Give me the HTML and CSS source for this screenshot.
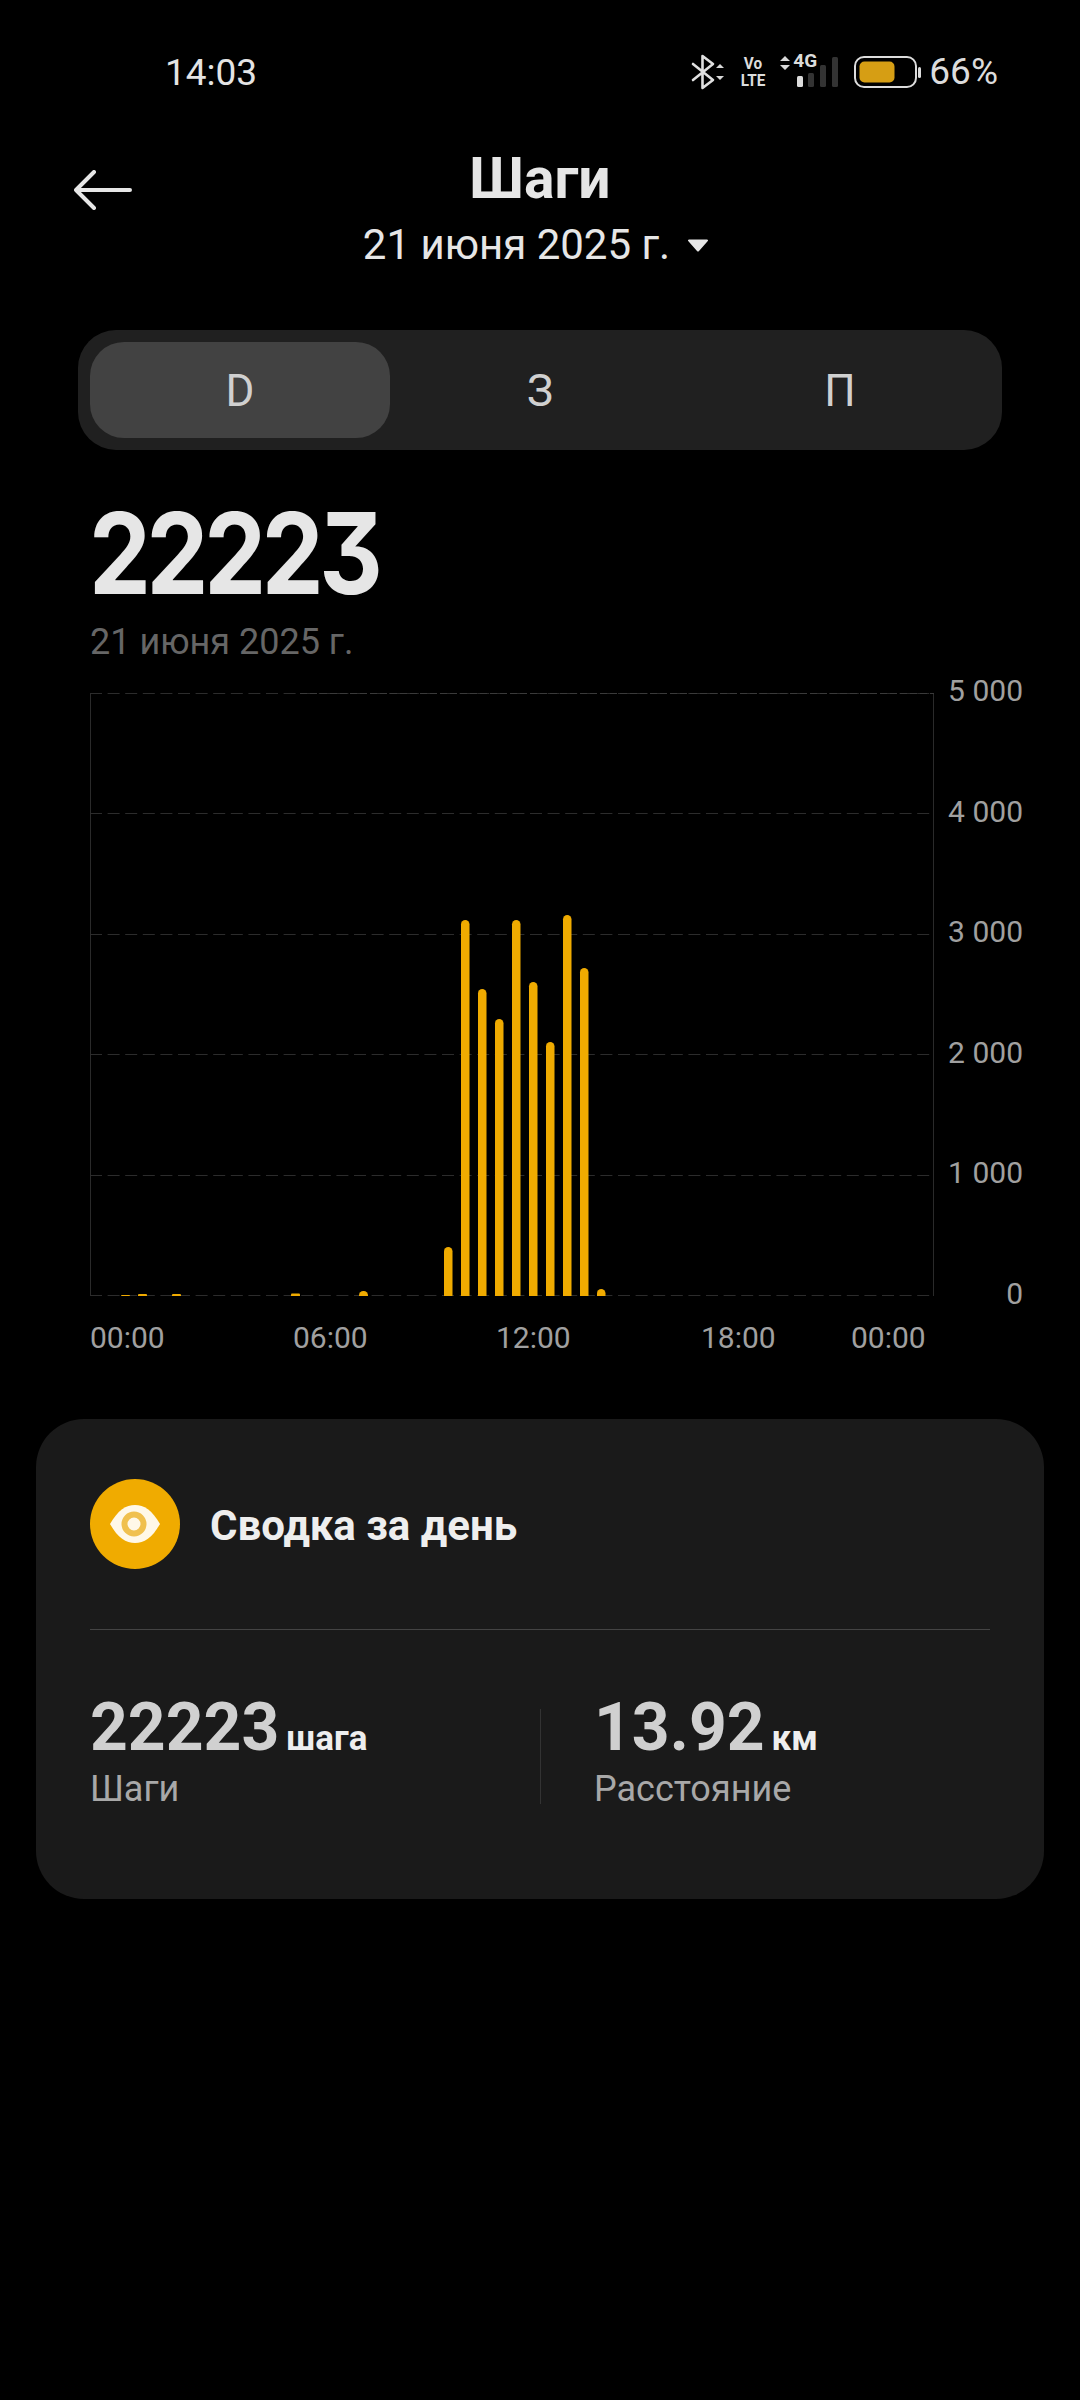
FILE: index.html
```html
<!DOCTYPE html>
<html lang="ru">
<head>
<meta charset="utf-8">
<title>Шаги</title>
<link rel="stylesheet" href="styles.css">
</head>
<body>
<main class="page">
  <div class="status-bar">
    <span class="clock">14:03</span>
    <div class="status-icons">
      <svg class="ic-bt" width="34" height="36" viewBox="0 0 34 36">
        <path d="M2 10 L22 26 L11.5 34 V2 L22 10 L2 26" fill="none" stroke="#e0e0e0" stroke-width="2.6" stroke-linecap="round" stroke-linejoin="round"/>
        <path d="M25 14 L29 10 L33 14 Z M25 22 L33 22 L29 26 Z" fill="#d8d8d8"/>
      </svg>
      <span class="volte"><span>Vo</span><span>LTE</span></span>
      <svg class="ic-arrows" width="12" height="16" viewBox="0 0 12 16">
        <path d="M1 6 L6 1 L11 6 Z M1 10 L11 10 L6 15 Z" fill="#d8d8d8"/>
      </svg>
      <div class="net">
        <svg class="ic-signal" width="44" height="32" viewBox="0 0 44 32">
          <rect x="3" y="21" width="6" height="11" rx="1.5" fill="#dcdcdc"/>
          <rect x="14" y="18" width="6" height="14" rx="1.5" fill="#333"/>
          <rect x="26" y="10" width="6" height="22" rx="1.5" fill="#333"/>
          <rect x="38" y="2" width="6" height="30" rx="1.5" fill="#333"/>
        </svg>
        <span class="net-label">4G</span>
      </div>
      <svg class="ic-battery" width="68" height="32" viewBox="0 0 68 32">
        <rect x="1" y="1" width="61" height="30" rx="9" fill="none" stroke="#dcdcdc" stroke-width="2"/>
        <rect x="5.500" y="5.500" width="35" height="21" rx="5" fill="#d69e14"/>
        <rect x="64" y="11" width="3" height="11" rx="1.500" fill="#dcdcdc"/>
      </svg>
      <span class="battery-pct">66%</span>
    </div>
  </div>

  <header class="top-bar">
    <svg class="back" width="58" height="40" viewBox="0 0 58 40">
      <path d="M20 2 L2 20 L20 38 M2 20 H56" fill="none" stroke="#e6e6e6" stroke-width="4" stroke-linecap="round" stroke-linejoin="round"/>
    </svg>
    <div class="top-titles">
      <h1 class="title">Шаги</h1>
      <div class="date-picker">
        <span>21 июня 2025 г.</span>
        <svg width="22" height="14" viewBox="0 0 22 14"><path d="M2 1.500 H20 a1 1 0 0 1 .8 1.600 L12 13 a1.300 1.300 0 0 1 -2 0 L1.200 3.100 A1 1 0 0 1 2 1.500 Z" fill="#e6e6e6"/></svg>
      </div>
    </div>
  </header>

  <nav class="segments">
    <span class="segment segment-active">D</span>
    <span class="segment">З</span>
    <span class="segment">П</span>
  </nav>

  <section class="today">
    <div class="today-value">22223</div>
    <div class="today-date">21 июня 2025 г.</div>
  </section>

  <section class="chart">
    <div class="chart-row">
      <svg class="plot" width="844" height="606" viewBox="90 692 844 606">
        <defs>
          <clipPath id="plot-area"><rect x="90" y="692" width="844" height="604"/></clipPath>
        </defs>
        <g class="frame">
          <line x1="90.500" y1="693" x2="90.500" y2="1296"/>
          <line x1="933.500" y1="693" x2="933.500" y2="1296"/>
        </g>
        <g class="grid">
          <line x1="90" y1="693.500" x2="934" y2="693.500"/>
          <line x1="90" y1="813.500" x2="934" y2="813.500"/>
          <line x1="90" y1="934.500" x2="934" y2="934.500"/>
          <line x1="90" y1="1054.500" x2="934" y2="1054.500"/>
          <line x1="90" y1="1175.500" x2="934" y2="1175.500"/>
          <line x1="90" y1="1295.500" x2="934" y2="1295.500"/>
        </g>
        <line class="grid-fine" x1="300" y1="693.500" x2="934" y2="693.500"/>
        <g class="bars" clip-path="url(#plot-area)">
          <rect x="121" y="1295" width="9" height="12" rx="1"/>
          <rect x="138" y="1294" width="9" height="12" rx="1"/>
          <rect x="172" y="1294" width="9" height="12" rx="1"/>
          <rect x="291" y="1293.500" width="9" height="12" rx="1"/>
          <rect x="359" y="1291" width="9" height="12" rx="4.250"/>
          <rect x="444" y="1247" width="8.500" height="60" rx="4.250"/>
          <rect x="461" y="920" width="8.500" height="390" rx="4.250"/>
          <rect x="478" y="989" width="8.500" height="320" rx="4.250"/>
          <rect x="495" y="1019" width="8.500" height="290" rx="4.250"/>
          <rect x="512" y="920" width="8.500" height="390" rx="4.250"/>
          <rect x="529" y="982" width="8.500" height="330" rx="4.250"/>
          <rect x="546" y="1042" width="8.500" height="270" rx="4.250"/>
          <rect x="563" y="915" width="8.500" height="395" rx="4.250"/>
          <rect x="580" y="968" width="8.500" height="340" rx="4.250"/>
          <rect x="597" y="1289" width="8.500" height="20" rx="4.250"/>
        </g>
      </svg>
      <div class="y-axis">
        <span>5 000</span>
        <span>4 000</span>
        <span>3 000</span>
        <span>2 000</span>
        <span>1 000</span>
        <span>0</span>
      </div>
    </div>
    <div class="x-axis">
      <span>00:00</span>
      <span>06:00</span>
      <span>12:00</span>
      <span>18:00</span>
      <span>00:00</span>
    </div>
  </section>

  <section class="card">
    <div class="card-head">
      <span class="badge">
        <svg width="52" height="40" viewBox="0 0 52 40">
          <path d="M1 20 C9 6 17 1 26 1 C35 1 43 6 51 20 C43 34 35 39 26 39 C17 39 9 34 1 20 Z" fill="#fff8e8"/>
          <circle cx="25" cy="20" r="9.500" fill="none" stroke="#f0c04e" stroke-width="6"/>
        </svg>
      </span>
      <h2 class="card-title">Сводка за день</h2>
    </div>
    <div class="stats">
      <div class="stat">
        <div class="stat-line"><span class="stat-value">22223</span><span class="stat-unit">шага</span></div>
        <div class="stat-label">Шаги</div>
      </div>
      <div class="stat stat-second">
        <div class="stat-line"><span class="stat-value">13.92</span><span class="stat-unit">км</span></div>
        <div class="stat-label">Расстояние</div>
      </div>
    </div>
  </section>
</main>
</body>
</html>
```
FILE: styles.css
```css
* { box-sizing: border-box; }

html, body {
  margin: 0;
  padding: 0;
  background: #000;
}

.page {
  width: 1080px;
  height: 2400px;
  background: #000;
  color: #e6e6e6;
  font-family: Roboto, "Noto Sans", sans-serif;
  overflow: hidden;
}

/* status bar */
.status-bar {
  height: 144px;
  padding: 52px 82px 0 165px;
  display: flex;
  justify-content: space-between;
  align-items: flex-start;
}

.clock {
  margin-top: 1px;
  font-size: 37px;
  line-height: 40px;
  color: #e4e4e4;
}

.status-icons {
  display: flex;
  align-items: flex-start;
}

.ic-bt { margin: 2px 0 0 0; }

.volte {
  display: flex;
  flex-direction: column;
  margin: 3px 0 0 16px;
  width: 24px;
  align-items: center;
  font-family: "Liberation Sans Narrow", Roboto, sans-serif;
  font-weight: 700;
  font-size: 17px;
  line-height: 17px;
  color: #dcdcdc;
  transform: scaleX(.9);
}

.ic-arrows { margin: 3px 0 0 14px; }

/* the 4G label sits just above the signal bars, to the right of the short ones */
.net {
  width: 44px;
  height: 36px;
  margin-left: 1px;
  position: relative;
}

.net-label {
  position: absolute;
  left: 1px;
  top: -1px;
  font-size: 19px;
  line-height: 20px;
  font-weight: 700;
  color: #dcdcdc;
}

.ic-signal {
  position: absolute;
  left: 2px;
  top: 3px;
}

.ic-battery { margin: 4px 0 0 18px; }

.battery-pct {
  margin-left: 7px;
  font-size: 37px;
  line-height: 40px;
  color: #dcdcdc;
}

/* page header */
.top-bar {
  height: 186px;
  position: relative;
  display: flex;
  justify-content: center;
}

.back {
  position: absolute;
  left: 74px;
  top: 26px;
}

.top-titles {
  display: flex;
  flex-direction: column;
  align-items: center;
}

.title {
  margin: 5px 0 0;
  font-size: 57px;
  line-height: 60px;
  font-weight: 700;
  color: #e6e6e6;
}

.date-picker {
  margin: 12px 8px 0 0;
  display: flex;
  align-items: center;
  gap: 17px;
  font-size: 42px;
  line-height: 48px;
  color: #e6e6e6;
}

/* day / week / period switch */
.segments {
  margin-left: 78px;
  width: 924px;
  height: 120px;
  padding: 12px;
  display: flex;
  background: #202020;
  border-radius: 38px;
}

.segment {
  width: 300px;
  height: 96px;
  padding-top: 2px;
  display: flex;
  align-items: center;
  justify-content: center;
  font-size: 44px;
  color: #d0d0d0;
  border-radius: 34px;
}

.segment-active {
  background: #424242;
}

/* today's total */
.today {
  padding-left: 89px;
  height: 201px;
}

.today-value {
  margin-top: 41px;
  font-family: Inter, Roboto, sans-serif;
  font-feature-settings: "cv09" 1;
  font-size: 113px;
  line-height: 124px;
  font-weight: 700;
  letter-spacing: -5px;
  color: #e6e6e6;
  transform: scaleX(.87);
  transform-origin: left center;
}

.today-date {
  margin: 5px 0 0 1px;
  font-size: 36px;
  line-height: 44px;
  color: #666;
}

/* hourly chart */
.chart {
  padding-left: 90px;
  height: 727px;
}

.chart-row {
  display: flex;
  height: 606px;
}

.plot {
  flex: none;
}

.frame line {
  stroke: #2a2a2a;
  stroke-width: 1;
}

.grid line {
  stroke: #2c2c2c;
  stroke-width: 1;
  stroke-dasharray: 12 5.6;
}

.grid-fine {
  stroke: #3a3a3a;
  stroke-width: 1;
  stroke-dasharray: 7 3;
}

.bars rect {
  fill: #f0ab00;
}

.y-axis {
  margin: -19px 0 0 15px;
  height: 639px;
  display: flex;
  flex-direction: column;
  justify-content: space-between;
  align-items: flex-end;
  width: 74px;
  flex: none;
  white-space: nowrap;
  font-size: 30px;
  line-height: 36px;
  color: #a0a0a0;
}

.x-axis {
  margin-top: 18px;
  display: grid;
  grid-template-columns: 203px 203px 205px 150px auto;
  font-size: 30px;
  line-height: 44px;
  color: #a0a0a0;
}

/* daily summary card */
.card {
  margin-left: 36px;
  width: 1008px;
  height: 480px;
  background: #1a1a1a;
  border-radius: 48px;
  padding: 60px 54px 0;
}

.card-head {
  display: flex;
  align-items: center;
  gap: 30px;
  height: 151px;
  padding-bottom: 60px;
  border-bottom: 1px solid #444;
}

.badge {
  width: 90px;
  height: 90px;
  flex: none;
  display: flex;
  align-items: center;
  justify-content: center;
  background: #f0ab00;
  border-radius: 50%;
}

.card-title {
  margin: 3px 0 0;
  font-size: 42px;
  line-height: 46px;
  font-weight: 700;
  color: #eee;
}

.stats {
  display: flex;
  padding-top: 62px;
}

.stat {
  width: 450px;
  height: 112px;
}

.stat-second {
  border-left: 1px solid #333;
  padding-left: 53px;
  margin-top: 17px;
  height: 95px;
}

.stat-second .stat-line {
  margin-top: -17px;
}

.stat-line {
  display: flex;
  align-items: baseline;
  gap: 7px;
  height: 72px;
}

.stat-value {
  font-size: 66px;
  line-height: 72px;
  font-weight: 700;
  color: #d0d0d0;
}

.stat-unit {
  font-size: 35px;
  font-weight: 700;
  color: #eee;
}

.stat-label {
  margin-top: 4px;
  font-size: 36px;
  line-height: 42px;
  color: #a8a8a8;
}
```
